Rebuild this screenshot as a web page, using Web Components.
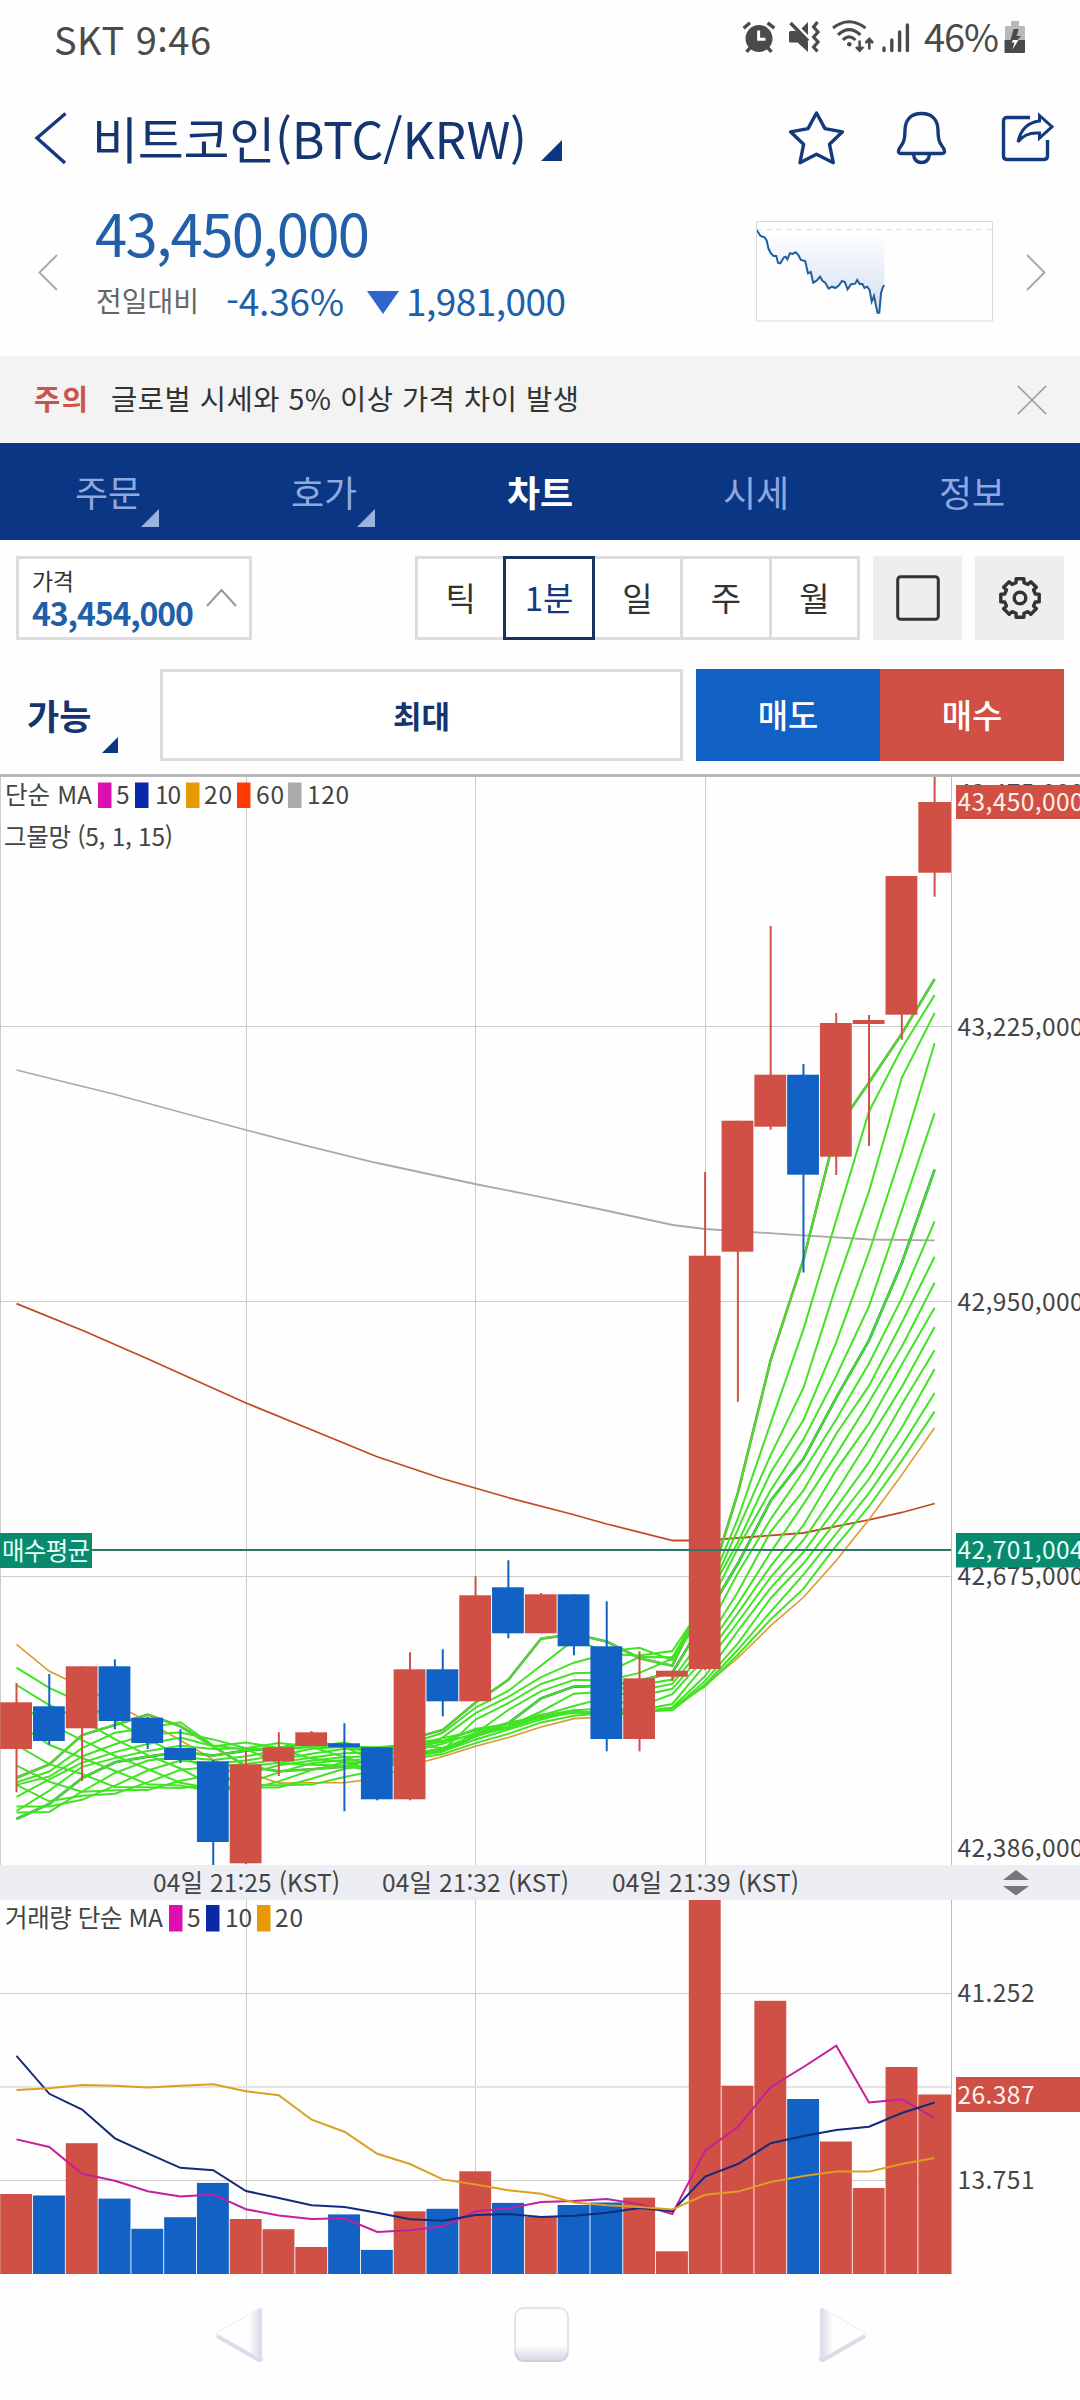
<!DOCTYPE html>
<html lang="ko">
<head>
<meta charset="UTF-8">
<title>비트코인(BTC/KRW)</title>
<style>
  body {
    margin: 0;
    width: 1080px;
    height: 2400px;
    overflow: hidden;
    background: #fefefe;
    color: #333;
    font-family: "Noto Sans CJK KR", "Noto Sans", sans-serif;
  }
</style>
</head>
<body>
<trade-app></trade-app>

<script>
// Base class: puts the template of each component in an open shadow root
class BaseElement extends HTMLElement {
  constructor() {
    super();
    this.attachShadow({ mode: "open" });
  }

  connectedCallback() {
    this.shadowRoot.innerHTML = this.template();
    this.ready();
  }

  template() {
    return "";
  }

  ready() {}
}

// Text that spreads its letters over a given width
class FitText extends BaseElement {
  template() {
    return `
      <style>
        :host { display: inline-block; white-space: nowrap; flex-shrink: 0; line-height: 1; }
        span { display: inline-block; }
      </style>
      <span><slot></slot></span>
    `;
  }

  ready() {
    const span = this.shadowRoot.querySelector("span");
    const width = Number(this.getAttribute("w"));
    const natural = span.getBoundingClientRect().width;
    const spacing = (width - natural) / (this.textContent.length - 1);
    span.style.letterSpacing = spacing + "px";
    span.style.marginRight = -spacing + "px";
  }
}

class StatusBar extends BaseElement {
  template() {
    return `
      <style>
        :host {
          display: flex;
          align-items: center;
          height: 76px;
          padding: 0 53px 0 54px;
          box-sizing: border-box;
          color: #4a4a4a;
          font-size: 38px;
        }
        .clock { flex: 1; }
        fit-text { margin-top: -5px; }
        svg { flex-shrink: 0; margin-top: -3px; }
      </style>
      <div class="clock"><fit-text w="157">SKT 9:46</fit-text></div>
      <svg width="46" height="34" fill="none" stroke="#4a4a4a" stroke-width="3.4">
        <circle cx="18" cy="18.5" r="13.5" fill="#4a4a4a" stroke="none"/>
        <path d="M2.6 8.2 9 2.8M26.6 2.8 33.4 8.2M9.5 27.5 5.5 31.8M26.5 27.5 30.5 31.8"/>
        <path d="M17.6 10.5V19.3H24.5" stroke="#fff" stroke-width="3"/>
      </svg>
      <svg width="44" height="34">
        <path d="M2 12.5Q2 11 3.5 11H9L21 22V32L10.5 22.5H3.5Q2 22.5 2 21Z" fill="#4a4a4a"/>
        <path d="M21 2V15L14.5 8.5Z" fill="#4a4a4a"/>
        <path d="M3.5 3 21 21" stroke="#4a4a4a" stroke-width="3.4"/>
        <path d="M30.5 2 26.6 7 31 12 26.6 17 31 22 26.6 27 30.5 31.5" fill="none" stroke="#4a4a4a" stroke-width="3.2"/>
      </svg>
      <svg width="51" height="34" fill="none" stroke="#4a4a4a" stroke-width="3">
        <path d="M2 8Q18 -4.5 34.5 8M7 14.8Q18 4.5 29.5 14.8M12 20Q18 13.5 24.5 20"/>
        <circle cx="18.3" cy="24.2" r="2.3" fill="#4a4a4a" stroke="none"/>
        <path d="M28.6 20.5V30M25 26.8 28.6 30.6 32.2 26.8M38.3 29.5V19.5M34.6 23 38.3 19 42 23" stroke-width="2.6"/>
      </svg>
      <svg width="42" height="34" stroke="#4a4a4a" stroke-width="3.4" stroke-linecap="round">
        <path d="M2 28V30.5M9.8 20V30.5M17.6 12V30.5M25.4 5V30.5"/>
      </svg>
      <fit-text w="75">46%</fit-text>
      <svg width="23" height="34" style="margin-left: 5px">
        <path d="M7 1H15V6H20Q21 6 21 7V20H1V7Q1 6 2 6H7Z" fill="#b9b9b9"/>
        <path d="M.5 20H21V32Q21 33 20 33H1.5Q.5 33 .5 32Z" fill="#4a4a4a"/>
        <path d="M9.6 9H14.8L12.5 16H17L13.5 20H6.5Z" fill="#4a4a4a"/>
        <path d="M9 20H14.5L8.5 29.5L10.5 22.5H7.5Z" fill="#fff"/>
      </svg>
    `;
  }
}

class CoinHeader extends BaseElement {
  template() {
    return `
      <style>
        :host {
          display: flex;
          align-items: center;
          height: 124px;
          padding: 0 25px 0 34px;
          box-sizing: border-box;
          color: #14356f;
        }
        h1 { margin: 0 0 2px 24px; font-weight: 400; font-size: 50px; line-height: 1; }
        .more { margin: 24px auto 0 14px; }
        .star { margin-right: 52px; }
        .bell { margin-right: 54px; }
        svg { overflow: visible; flex-shrink: 0; }
      </style>
      <svg width="34" height="52" fill="none" stroke="#14397c" stroke-width="3.4">
        <path d="M31.5 1.5 3 26 31 51"/>
      </svg>
      <h1><fit-text w="435">비트코인(BTC/KRW)</fit-text></h1>
      <svg class="more" width="21" height="21"><path d="M21 0V21H0Z" fill="#0a3684"/></svg>
      <svg class="star" width="55" height="54" fill="none" stroke="#14397c" stroke-width="3.4" stroke-linejoin="round">
        <path d="M27.5 2 36 17.6 53.5 20.8 40.5 33.3 44.3 51.7 27.5 43.3 11 51.7 14.6 33.3 1.5 20.8 19 17.6Z"/>
      </svg>
      <svg class="bell" width="51" height="54" fill="none" stroke="#14397c" stroke-width="3.4" stroke-linejoin="round">
        <path d="M25.5 2.5C14 2.5 9.3 10 9 19C8.8 28 8 31 5 35C2.5 38 .8 42.5 5 42.5H46C50.2 42.5 48.5 38 46 35C43 31 42.2 28 42 19C41.7 10 37 2.5 25.5 2.5Z"/>
        <path d="M17.5 43.5Q18.5 51.5 25.5 51.5Q32.5 51.5 33.5 43.5"/>
      </svg>
      <svg width="54" height="54" fill="none" stroke="#14397c" stroke-width="3.4">
        <path d="M29 6.5H6Q2.5 6.5 2.5 10V45Q2.5 48.5 6 48.5H43Q46.5 48.5 46.5 45V29"/>
        <path d="M38.5 4.5 51 15.7 38.5 27V22Q24 21 17 31Q21 12 38.5 10Z" stroke-width="3"/>
      </svg>
    `;
  }
}

class PriceSummary extends BaseElement {
  template() {
    const line = "0.7,9 4.5,15 8.6,16.3 10.7,19.7 12.4,27.3 14.8,32.3 17.6,35 20.3,35 22,41.7 24.4,42.3 27.9,36.3 29.6,35.7 31.3,38.3 34,32.3 36.5,33 39.6,31.3 42.4,34 44.8,39 49.2,40 52,52.3 54.8,51 57.2,61.7 60.6,59.7 64,55.7 66.5,59.7 69.2,61.7 72.7,67.7 76,65.7 79.5,67 83,64.3 86,60 88.8,61 91.6,68.3 95,63.3 99.2,62.7 101.2,59 103.7,63 106.4,63 108.5,67 111.2,65.7 113.6,69 115.7,80.7 118,75 120.2,85.7 121.6,91.7 123.3,91.7 125,72.3 127,65.7 128.4,64.3";
    return `
      <style>
        :host {
          display: flex;
          align-items: center;
          height: 156px;
          padding: 0 34px 13px 38px;
          box-sizing: border-box;
          color: #215fa9;
        }
        .values { flex: 1; padding-left: 37px; }
        .price { display: flex; align-items: center; height: 58px; font-size: 58px; }
        .change { display: flex; align-items: center; height: 79px; font-size: 37px; }
        .label { font-size: 28px; color: #666; margin: -2px 27px 0 1px; }
        .down { margin: 3px 7px 0 23px; }
        .spark { margin-right: 33px; }
      </style>
      <svg width="20" height="38" fill="none" stroke="#aaa" stroke-width="2"><path d="M19 2 1.5 19.5 19 37"/></svg>
      <div class="values">
        <div class="price"><fit-text w="275">43,450,000</fit-text></div>
        <div class="change">
          <fit-text class="label" w="103">전일대비</fit-text>
          <fit-text w="118">-4.36%</fit-text>
          <svg class="down" width="32" height="23"><path d="M0 0H32L16 23Z" fill="#2f66cc"/></svg>
          <fit-text w="160">1,981,000</fit-text>
        </div>
      </div>
      <svg class="spark" width="237" height="101">
        <defs>
          <linearGradient id="fade" x1="0" y1="0" x2="0" y2="1">
            <stop offset="0" stop-color="#fff"/>
            <stop offset="1" stop-color="#d3dff2"/>
          </linearGradient>
        </defs>
        <polygon points="0.7,9 ${line} 128.4,9" fill="url(#fade)"/>
        <path d="M.5 8.5H236" stroke="#ddd" stroke-dasharray="5 5"/>
        <polyline points="${line}" fill="none" stroke="#215f9f" stroke-width="2"/>
        <rect x=".5" y=".5" width="236" height="99.5" fill="none" stroke="#dadada"/>
      </svg>
      <svg width="20" height="38" fill="none" stroke="#aaa" stroke-width="2"><path d="M1 2 18.5 19.5 1 37"/></svg>
    `;
  }
}

class NoticeBar extends BaseElement {
  template() {
    return `
      <style>
        :host {
          display: flex;
          align-items: center;
          height: 87px;
          padding: 0 33px 0 34px;
          box-sizing: border-box;
          background: #f3f3f3;
          font-size: 28.5px;
        }
        .tag { color: #c8544b; font-weight: 700; margin-right: 23px; }
        fit-text { margin-top: -3px; }
        svg { margin-left: auto; }
      </style>
      <fit-text class="tag" w="54">주의</fit-text>
      <fit-text w="468">글로벌 시세와 5% 이상 가격 차이 발생</fit-text>
      <svg width="30" height="30" stroke="#999" stroke-width="1.6"><path d="M1 1 29 29M29 1 1 29"/></svg>
    `;
  }
}

class MenuTab extends BaseElement {
  template() {
    return `
      <style>
        :host {
          flex: 1;
          display: flex;
          align-items: center;
          justify-content: center;
          position: relative;
          color: #8fa9de;
          font-size: 36px;
          line-height: 1;
          padding-bottom: 2px;
        }
        :host([active]) { color: #fff; font-weight: 700; }
        svg { display: none; position: absolute; right: 57px; bottom: 13px; }
        :host([more]) svg { display: block; }
      </style>
      <slot></slot>
      <svg width="18" height="18"><path d="M18 0V18H0Z" fill="#9db3df"/></svg>
    `;
  }
}

class MenuTabs extends BaseElement {
  template() {
    return `
      <style>
        :host { display: flex; height: 97px; background: #0a3684; }
      </style>
      <menu-tab more>주문</menu-tab>
      <menu-tab more>호가</menu-tab>
      <menu-tab active>차트</menu-tab>
      <menu-tab>시세</menu-tab>
      <menu-tab>정보</menu-tab>
    `;
  }
}

class ChartToolbar extends BaseElement {
  // Outline of a cog with eight teeth
  gear(cx, cy) {
    const points = [];
    for (let i = 0; i < 8; i++) {
      [[-14.7, 15.8], [-11.4, 19.6], [11.4, 19.6], [14.7, 15.8]].forEach(([deg, r]) => {
        const a = ((i * 45 + deg - 90) * Math.PI) / 180;
        points.push((cx + r * Math.cos(a)).toFixed(1) + "," + (cy + r * Math.sin(a)).toFixed(1));
      });
    }
    return points.join(" ");
  }

  template() {
    return `
      <style>
        :host {
          display: flex;
          height: 84px;
          padding: 16px 16px 0;
        }
        .price {
          width: 236px;
          height: 84px;
          box-sizing: border-box;
          border: 3px solid #dcdcdc;
          display: flex;
          align-items: center;
          padding-left: 13px;
          background: #fff;
        }
        .price div { display: flex; flex-direction: column; align-items: flex-start; gap: 4px; width: 174px; }
        .name { font-size: 23px; }
        .value { font-size: 32px; font-weight: 700; color: #215fa9; }
        .periods { display: flex; margin-left: 163px; width: 445px; }
        .periods span {
          flex: 1;
          border: 3px solid #dcdcdc;
          margin-right: -3px;
          display: flex;
          align-items: center;
          justify-content: center;
          font-size: 33px;
          line-height: 1;
          padding-bottom: 1px;
          box-sizing: border-box;
          background: #fff;
        }
        .periods span:last-child { margin-right: 0; }
        .periods .on { border-color: #17345f; color: #14397c; position: relative; z-index: 1; }
        .button {
          width: 89px;
          margin-left: 13px;
          background: #eee;
          display: flex;
          align-items: center;
          justify-content: center;
        }
      </style>
      <div class="price">
        <div>
          <fit-text class="name" w="42">가격</fit-text>
          <fit-text class="value" w="162">43,454,000</fit-text>
        </div>
        <svg width="32" height="20" fill="none" stroke="#999" stroke-width="2"><path d="M1 18 15.5 2 30 18"/></svg>
      </div>
      <div class="periods">
        <span>틱</span><span class="on">1분</span><span>일</span><span>주</span><span>월</span>
      </div>
      <div class="button">
        <svg width="44" height="46"><rect x="1.7" y="1.7" width="40.6" height="42.6" rx="3" fill="none" stroke="#333" stroke-width="3"/></svg>
      </div>
      <div class="button">
        <svg width="44" height="44" fill="none" stroke="#333" stroke-width="3.4" stroke-linejoin="round">
          <polygon points="${this.gear(22, 22)}"/>
          <circle cx="22" cy="22" r="5.8"/>
        </svg>
      </div>
    `;
  }
}

class OrderBar extends BaseElement {
  template() {
    return `
      <style>
        :host {
          display: flex;
          height: 92px;
          padding: 29px 16px 13px;
          border-bottom: 3px solid #b9b9b9;
          line-height: 1;
        }
        .mode {
          width: 132px;
          padding: 0 0 2px 11px;
          box-sizing: border-box;
          display: flex;
          align-items: center;
          position: relative;
          color: #14356f;
          font-size: 35px;
          font-weight: 700;
        }
        .mode svg { position: absolute; right: 30px; bottom: 8px; }
        .max, .sell, .buy { display: flex; align-items: center; justify-content: center; padding-bottom: 1px; box-sizing: border-box; }
        .max {
          margin-left: 12px;
          width: 523px;
          border: 3px solid #dcdcdc;
          color: #14356f;
          font-size: 31px;
          font-weight: 700;
          background: #fff;
        }
        .sell, .buy { width: 184px; color: #fff; font-size: 33px; font-weight: 500; }
        .sell { margin-left: 13px; background: #1261c4; }
        .buy { background: #d05045; }
      </style>
      <div class="mode">가능<svg width="16" height="16"><path d="M16 0V16H0Z" fill="#0a3684"/></svg></div>
      <div class="max">최대</div>
      <div class="sell">매도</div>
      <div class="buy">매수</div>
    `;
  }
}

const RED = "#d05045";
const BLUE = "#1261c4";
const STEP = 32.79;
const AXIS = 951.5;
const TICKS = [246.5, 475.5, 705.5];
const barX = (i) => 16.5 + STEP * i;

const text = (x, y, value, width, fill = "#444") =>
  `<text x="${x}" y="${y}" fill="${fill}"${width ? ` textLength="${width}"` : ""}>${value}</text>`;

const polyline = (points, color, width = 1.6) =>
  `<polyline points="${points.map((p) => p[0].toFixed(1) + "," + p[1].toFixed(1)).join(" ")}" fill="none" stroke="${color}" stroke-width="${width}"/>`;

const chartStyle = `
  <style>
    :host { display: block; }
    svg { display: block; font-size: 24.5px; }
  </style>
`;

// [color, body top, body bottom, high, low], in pixels of the page
const CANDLES = [
  ["r", 1702.3, 1749, 1683, 1792.3],
  ["b", 1706.3, 1741, 1674, 1744.5],
  ["r", 1666.3, 1728.3, 1666.3, 1781],
  ["b", 1666.3, 1721, 1659.3, 1729.3],
  ["b", 1717.7, 1743, 1717, 1749],
  ["b", 1748, 1760, 1729.3, 1763],
  ["b", 1761.3, 1842, 1760, 1865],
  ["r", 1764.3, 1863.3, 1751.7, 1864],
  ["r", 1747.3, 1761.3, 1732.3, 1776],
  ["r", 1732.3, 1746, 1731, 1746],
  ["b", 1743.3, 1747.3, 1723.3, 1811.3],
  ["b", 1747.3, 1799.3, 1747.3, 1800.3],
  ["r", 1669.3, 1799.3, 1652.3, 1800.3],
  ["b", 1669.3, 1701.3, 1649.3, 1716.3],
  ["r", 1595.3, 1701.3, 1576.3, 1701.3],
  ["b", 1587.3, 1633.3, 1560.3, 1638.3],
  ["r", 1594.3, 1633.3, 1593, 1633.3],
  ["b", 1594.3, 1646.3, 1594.3, 1655.3],
  ["b", 1646.3, 1739, 1601.3, 1751.3],
  ["r", 1678.3, 1739, 1651.3, 1751.3],
  ["r", 1670.7, 1676.7, 1670.7, 1681],
  ["r", 1255.7, 1669, 1172, 1670],
  ["r", 1120.7, 1251.7, 1120.7, 1401.8],
  ["r", 1074.7, 1126.7, 926, 1129.7],
  ["b", 1074.7, 1174.7, 1064, 1272.5],
  ["r", 1023, 1156.7, 1013, 1175],
  ["r", 1020, 1024, 1015, 1146],
  ["r", 876, 1014.7, 876, 1039.7],
  ["r", 802, 872.7, 777, 896.7]
];

// Closes of the 19 bars before the first visible one
const HISTORY = [1203, 1356, 1380, 1385, 1389, 1455, 1518, 1526, 1740, 1746, 1891, 1925, 1880, 1800, 1806, 1807, 1813, 1772, 1794];

const MA60 = [[16.5, 1303.6], [84, 1331], [148, 1359], [246, 1403], [312, 1430], [376.5, 1456.5], [442, 1478.5], [508, 1497.5], [573, 1514.5], [606.7, 1524], [672.7, 1540.5], [705, 1540.5], [803, 1533], [870, 1519.6], [902, 1512.5], [934.7, 1503.5]];
const MA120 = [[16.5, 1070], [58.5, 1080.5], [113.6, 1094], [246, 1130], [310, 1146.6], [375, 1162.5], [475, 1184], [540, 1196.8], [606, 1210.5], [672.7, 1225], [705, 1229], [803, 1235.3], [870, 1239.5], [934.7, 1240.3]];

class PriceChart extends BaseElement {
  average(period) {
    const closes = HISTORY.concat(CANDLES.map((c) => (c[0] === "r" ? c[1] : c[2])));
    return CANDLES.map((_, i) => {
      const end = i + HISTORY.length + 1;
      const sum = closes.slice(end - period, end).reduce((a, b) => a + b, 0);
      return [barX(i), sum / period];
    });
  }

  candles() {
    return CANDLES.map(([type, top, bottom, high, low], i) => {
      const color = type === "r" ? RED : BLUE;
      const x = barX(i);
      return `<path d="M${x} ${high}V${low}" stroke="${color}" stroke-width="2"/>
        <rect x="${x - 16.3}" y="${top}" width="${i === 28 ? 33 : 31.8}" height="${bottom - top}" fill="${color}"/>`;
    }).join("");
  }

  template() {
    const net = [];
    for (let period = 5; period < 20; period++) {
      net.push(polyline(this.average(period), "#42e324", 2));
    }
    const swatches = [[98, "#dc10b2"], [135, "#0a28aa"], [186, "#e89a04"], [237, "#ff3a04"], [288, "#aaa"]];
    return `
      ${chartStyle}
      <svg width="1080" height="1088" viewBox="0 777 1080 1088">
        <path d="M.5 777V1865M${TICKS.map((x) => x + " 777V1865").join("M")}M0 1026.5H951M0 1301.5H951M0 1576.5H951" stroke="#ccc"/>
        ${swatches.map(([x, color]) => `<rect x="${x}" y="782.5" width="13.5" height="25.5" fill="${color}"/>`).join("")}
        ${text(5, 804, "단순 MA", 87)}
        ${text(116, 804, "5")}
        ${text(155, 804, "10", 26)}
        ${text(204, 804, "20", 28)}
        ${text(256, 804, "60", 28)}
        ${text(307, 804, "120", 42)}
        ${text(4, 846, "그물망 (5, 1, 15)", 169)}
        ${polyline(MA120, "#aaa", 1.8)}
        ${polyline(MA60, "#c04a26", 1.8)}
        ${polyline(this.average(20), "#dc9a2c")}
        ${polyline(this.average(10), "#2a7a6a", 2.6)}
        ${polyline(this.average(5), "#8a7a6a", 2.6)}
        ${net.join("")}
        ${this.candles()}
        <path d="M${AXIS} 777V1865" stroke="#bbb"/>
        <path d="M0 1550H951" stroke="#2c7768" stroke-width="2"/>
        <rect x="0" y="1533" width="92" height="35" fill="#078a6e"/>
        ${text(2, 1559.5, "매수평균", 88, "#e8fff8")}
        ${text(957.5, 802, "43,475,000", 126)}
        <rect x="956" y="785" width="124" height="34" fill="${RED}"/>
        ${text(957.5, 811, "43,450,000", 126, "#fff0ec")}
        ${text(957.5, 1035.5, "43,225,000", 126)}
        ${text(957.5, 1310.5, "42,950,000", 126)}
        ${text(957.5, 1585, "42,675,000", 126)}
        <rect x="956" y="1533" width="124" height="34.5" fill="#078a6e"/>
        ${text(957.5, 1559, "42,701,004", 126, "#e8fff8")}
        ${text(957.5, 1857, "42,386,000", 126)}
      </svg>
    `;
  }
}

class TimeAxis extends BaseElement {
  template() {
    const labels = ["04일 21:25 (KST)", "04일 21:32 (KST)", "04일 21:39 (KST)"];
    return `
      ${chartStyle}
      <svg width="1080" height="35">
        <rect width="1080" height="35" fill="#edeef4"/>
        ${labels.map((label, i) => text(TICKS[i] - 93.5, 27, label, 187)).join("")}
        <path d="M1003 15 1016 5 1029 15ZM1003 21 1016 30.5 1029 21Z" fill="#777"/>
      </svg>
    `;
  }
}

// [color, top] of each volume bar; the bars stand on y = 2274
const VOLUMES = [
  ["r", 2194], ["b", 2195.5], ["r", 2143.2], ["b", 2198.6], ["b", 2228.8], ["b", 2217.2], ["b", 2182.9], ["r", 2219],
  ["r", 2229.2], ["r", 2247], ["b", 2214.4], ["b", 2249.9], ["r", 2211.3], ["b", 2208.8], ["r", 2171.3], ["b", 2202.9],
  ["r", 2217], ["b", 2205], ["b", 2202.5], ["r", 2197.6], ["r", 2251.3], ["r", 1900], ["r", 2085.7], ["r", 2000.8],
  ["b", 2099], ["r", 2141.5], ["r", 2188], ["r", 2067], ["r", 2094.5]
];
const VOLUME_MA = {
  "#c4209c": [2139.4, 2147, 2173.7, 2180.8, 2191.3, 2196.5, 2194.4, 2209.2, 2215.5, 2219, 2218.3, 2232, 2230.2, 2226.4, 2211.3, 2208.5, 2202, 2201, 2199, 2204.3, 2214, 2150.6, 2127, 2087, 2067, 2045.7, 2102.5, 2099.4, 2118],
  "#152a7c": [2055.9, 2093.8, 2109.6, 2138.3, 2153.4, 2167.8, 2170.2, 2191, 2198, 2205.3, 2207, 2212.7, 2219.3, 2220.7, 2215.1, 2214, 2217, 2215.8, 2212.7, 2208, 2211.3, 2176.5, 2164, 2143.2, 2135.9, 2130, 2126.7, 2113, 2102.5],
  "#dc9f22": [2090, 2088.2, 2085, 2085.7, 2087.5, 2085.7, 2084.3, 2091.3, 2095.2, 2119.7, 2131.7, 2153.8, 2164, 2179.4, 2184.6, 2190.2, 2193.7, 2202.5, 2205.3, 2207, 2209.5, 2194.8, 2191.6, 2182, 2175.9, 2171.6, 2171.6, 2164, 2158]
};

class VolumeChart extends BaseElement {
  template() {
    const bars = VOLUMES.map(([type, top], i) =>
      `<rect x="${barX(i) - 16.3}" y="${top}" width="${i === 28 ? 33 : 31.9}" height="${2274 - top}" fill="${type === "r" ? RED : BLUE}"/>`
    );
    const lines = Object.entries(VOLUME_MA).map(([color, values]) =>
      polyline(values.map((y, i) => [barX(i), y]), color, 2)
    );
    const swatches = [[169, "#dc10b2"], [206, "#0a28aa"], [257, "#e89a04"]];
    return `
      ${chartStyle}
      <svg width="1080" height="374" viewBox="0 1900 1080 374">
        <path d="M${TICKS.map((x) => x + " 1900V2274").join("M")}M0 1993.5H951M0 2180.5H951" stroke="#ccc"/>
        <path d="M0 2087H951" stroke="#e4e4e4" stroke-width="2"/>
        ${swatches.map(([x, color]) => `<rect x="${x}" y="1905" width="13.5" height="26.5" fill="${color}"/>`).join("")}
        ${text(5, 1927, "거래량 단순 MA", 158)}
        ${text(187, 1927, "5")}
        ${text(225, 1927, "10", 27)}
        ${text(275, 1927, "20", 28)}
        ${bars.join("")}
        ${lines.join("")}
        <path d="M${AXIS} 1900V2274" stroke="#bbb"/>
        ${text(957.5, 2002, "41.252", 77)}
        ${text(957.5, 2189, "13.751", 77)}
        <rect x="956" y="2077" width="124" height="35" fill="${RED}"/>
        ${text(957.5, 2104, "26.387", 77, "#fff0ec")}
      </svg>
    `;
  }
}

class NavBar extends BaseElement {
  template() {
    return `
      <style>
        :host {
          display: flex;
          justify-content: space-between;
          align-items: center;
          height: 126px;
          padding: 0 212px 5px 214px;
          box-sizing: border-box;
        }
      </style>
      <svg width="50" height="56">
        <defs>
          <linearGradient id="side" x1="0" x2="1"><stop offset=".72" stop-color="#fefefe"/><stop offset="1" stop-color="#d5d4e4"/></linearGradient>
        </defs>
        <path d="M3 26 44 2Q48 0 48 4V52Q48 56 44 54L3 30Q0 28 3 26Z" fill="url(#side)" stroke="#ebebf1"/>
        <path d="M3 29 44 52.5Q47 54 47.5 51" fill="none" stroke="#dddbe8" stroke-width="4"/>
      </svg>
      <svg width="55" height="56">
        <defs>
          <linearGradient id="base" x1="0" y1="0" x2="0" y2="1"><stop offset=".7" stop-color="#fefefe"/><stop offset="1" stop-color="#d5d4e6"/></linearGradient>
        </defs>
        <rect x="1" y="1" width="53" height="53" rx="9" fill="url(#base)" stroke="#e4e3ed" stroke-width="2"/>
        <path d="M2 46Q3 54 10 54H45Q52 54 53 46" fill="none" stroke="#d0cedd" stroke-width="2"/>
      </svg>
      <svg width="50" height="56">
        <defs>
          <linearGradient id="edge" x1="0" x2="1"><stop offset="0" stop-color="#d8d7e8"/><stop offset=".28" stop-color="#fefefe"/></linearGradient>
        </defs>
        <path d="M47 26 6 2Q2 0 2 4V52Q2 56 6 54L47 30Q50 28 47 26Z" fill="url(#edge)" stroke="#ebebf1"/>
        <path d="M47 29 6 52.5Q3 54 2.5 51" fill="none" stroke="#dddbe8" stroke-width="4"/>
      </svg>
    `;
  }
}

class TradeApp extends BaseElement {
  template() {
    return `
      <style>
        :host { display: flex; flex-direction: column; width: 1080px; }
      </style>
      <status-bar></status-bar>
      <coin-header></coin-header>
      <price-summary></price-summary>
      <notice-bar></notice-bar>
      <menu-tabs></menu-tabs>
      <chart-toolbar></chart-toolbar>
      <order-bar></order-bar>
      <price-chart></price-chart>
      <time-axis></time-axis>
      <volume-chart></volume-chart>
      <nav-bar></nav-bar>
    `;
  }
}

customElements.define("fit-text", FitText);
customElements.define("status-bar", StatusBar);
customElements.define("coin-header", CoinHeader);
customElements.define("price-summary", PriceSummary);
customElements.define("notice-bar", NoticeBar);
customElements.define("menu-tab", MenuTab);
customElements.define("menu-tabs", MenuTabs);
customElements.define("chart-toolbar", ChartToolbar);
customElements.define("order-bar", OrderBar);
customElements.define("price-chart", PriceChart);
customElements.define("time-axis", TimeAxis);
customElements.define("volume-chart", VolumeChart);
customElements.define("nav-bar", NavBar);
customElements.define("trade-app", TradeApp);
</script>
</body>
</html>
